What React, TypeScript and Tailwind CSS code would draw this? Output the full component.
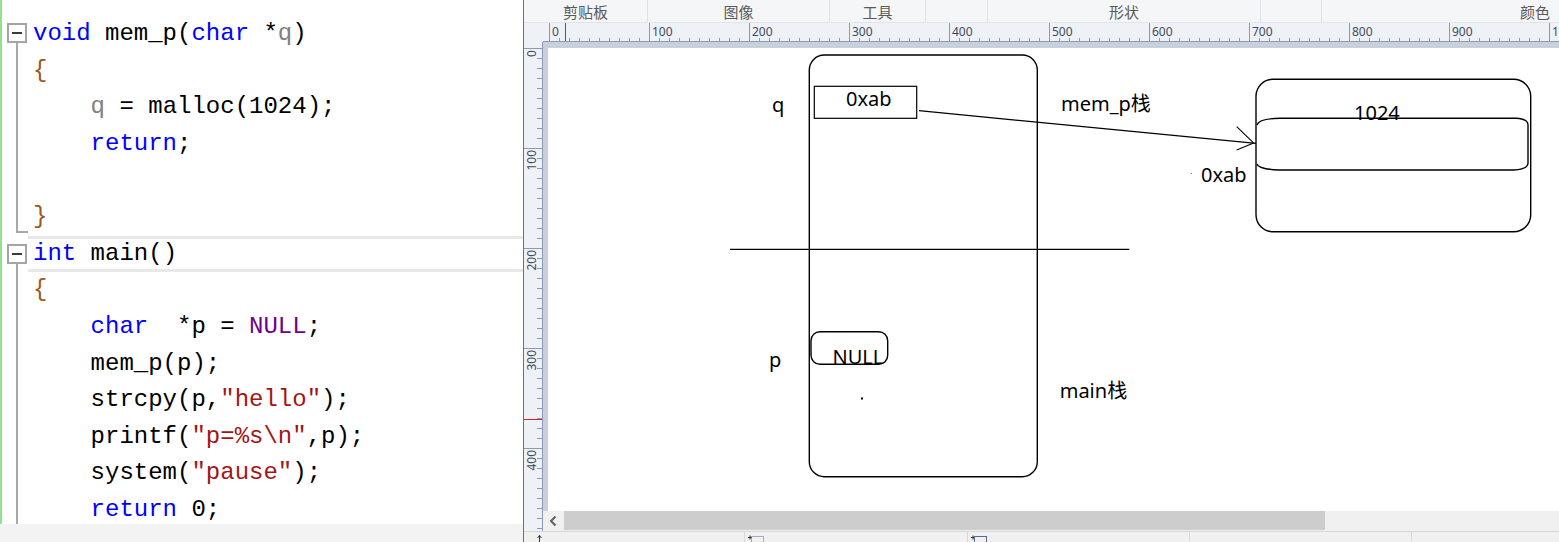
import React from "react";

const K = "text-[#0000ff]";
const P = "text-[#808080]";
const B = "text-[#9b5a1a]";
const S = "text-[#a31515]";
const N = "text-[#6f008a]";
const D = "text-black";

type Tok = [string, string];

const codeLines: Tok[][] = [
  [["void", K], [" mem_p(", D], ["char", K], [" *", D], ["q", P], [")", D]],
  [["{", B]],
  [["    ", D], ["q", P], [" = malloc(1024);", D]],
  [["    ", D], ["return", K], [";", D]],
  [],
  [["}", B]],
  [["int", K], [" main()", D]],
  [["{", B]],
  [["    ", D], ["char", K], ["  *p = ", D], ["NULL", N], [";", D]],
  [["    mem_p(p);", D]],
  [["    strcpy(p,", D], ['"hello"', S], [");", D]],
  [["    printf(", D], ['"p=%s\\n"', S], [",p);", D]],
  [["    system(", D], ['"pause"', S], [");", D]],
  [["    ", D], ["return", K], [" 0;", D]],
];

function Gutter() {
  return (
    <svg width={28} height={524} className="shrink-0 block">
      <rect x={0} y={0} width={2} height={524} fill="#8fe38f" />
      {/* fold box 1 */}
      <rect x={8} y={24} width={18} height={18} fill="#fff" stroke="#a5a5a5" strokeWidth={2} />
      <line x1={12} y1={33} x2={22} y2={33} stroke="#3a3a3a" strokeWidth={2} />
      <line x1={17} y1={43} x2={17} y2={233} stroke="#a8a8a8" strokeWidth={2} />
      <line x1={16} y1={232} x2={28} y2={232} stroke="#a8a8a8" strokeWidth={2} />
      {/* fold box 2 */}
      <rect x={8} y={245} width={18} height={18} fill="#fff" stroke="#a5a5a5" strokeWidth={2} />
      <line x1={12} y1={254} x2={22} y2={254} stroke="#3a3a3a" strokeWidth={2} />
      <line x1={17} y1={264} x2={17} y2={524} stroke="#a8a8a8" strokeWidth={2} />
    </svg>
  );
}

function CodePanel() {
  return (
    <div className="flex flex-col w-[523px] shrink-0">
      <div className="flex h-[524px] bg-white overflow-hidden">
        <Gutter />
        <div className="flex-1 flex flex-col pt-[16.3px] font-['Liberation_Mono',monospace] text-[24px] leading-[36.6px] whitespace-pre overflow-hidden">
          {codeLines.map((toks, i) => (
            <div
              key={i}
              className={
                i === 6
                  ? "h-[36.6px] shrink-0 pl-[5px] shadow-[inset_0_3px_0_#e8e8e8,inset_0_-3px_0_#e8e8e8]"
                  : "h-[36.6px] shrink-0 pl-[5px]"
              }
            >
              {toks.map(([t, c], j) => (
                <span key={j} className={c}>
                  {t}
                </span>
              ))}
            </div>
          ))}
        </div>
      </div>
      <div className="h-[18px] bg-[#f3f3f3]" />
    </div>
  );
}

function HRuler() {
  const w = 1035;
  const ticks: React.ReactNode[] = [];
  for (let x = 25; x < w; x += 10) {
    const major = (x - 25) % 100 === 0;
    ticks.push(
      <line
        key={x}
        x1={x + 0.5}
        x2={x + 0.5}
        y1={major ? 0 : 15}
        y2={19}
        stroke="#8a9ab6"
        strokeWidth={1}
      />
    );
    if (major) {
      ticks.push(
        <text key={"t" + x} x={x + 3} y={13} fontSize={12} fill="#3f4a5e" fontFamily="Noto Sans, sans-serif">
          {x - 25}
        </text>
      );
    }
  }
  return (
    <div className="h-[19px] bg-[#eef1f6] shrink-0">
      <svg width={w} height={19} className="block">
        {ticks}
        <line x1={41.5} x2={41.5} y1={0} y2={19} stroke="#e02020" strokeWidth={1} />
        <line x1={19} x2={w} y1={18.5} y2={18.5} stroke="#8a9ab6" strokeWidth={1} />
      </svg>
    </div>
  );
}

function VRuler() {
  const h = 489;
  const ticks: React.ReactNode[] = [];
  for (let y = 6; y < h; y += 10) {
    const major = (y - 6) % 100 === 0;
    ticks.push(
      <line
        key={y}
        y1={y + 0.5}
        y2={y + 0.5}
        x1={major ? 0 : 13}
        x2={19}
        stroke="#8a9ab6"
        strokeWidth={1}
      />
    );
    if (major) {
      ticks.push(
        <text
          key={"t" + y}
          transform={`translate(11.5, ${y + 2}) rotate(-90)`}
          textAnchor="end"
          fontSize={12}
          fill="#3f4a5e"
          fontFamily="Noto Sans, sans-serif"
        >
          {y - 6}
        </text>
      );
    }
  }
  return (
    <div className="w-[19px] bg-[#eef1f6] shrink-0">
      <svg width={19} height={h} className="block">
        {ticks}
        <line y1={377.5} y2={377.5} x1={0} x2={19} stroke="#e02020" strokeWidth={1} />
        <line x1={18.5} x2={18.5} y1={0} y2={h} stroke="#8a9ab6" strokeWidth={1} />
      </svg>
    </div>
  );
}

const txt = "absolute font-['Noto_Sans','Noto_Sans_CJK_SC',sans-serif] text-[20px] leading-[20px] text-black whitespace-nowrap";

function Canvas() {
  return (
    <div className="relative flex-1 bg-white overflow-hidden">
      <svg width={1011} height={463} className="absolute left-0 top-0" fill="none" stroke="#000" strokeWidth={1.4}>
        {/* main stack box */}
        <rect x={261.3} y={7} width={228} height={421.7} rx={15} />
        {/* 0xab box */}
        <rect x={266.3} y={38.3} width={102.4} height={32} strokeWidth={1.2} />
        {/* arrow */}
        <line x1={371} y1={62.7} x2={708} y2={95.3} strokeWidth={1.2} />
        <line x1={688.7} y1={78.7} x2={706} y2={95.3} strokeWidth={1.1} />
        <line x1={688.7} y1={102} x2={705} y2={95.3} strokeWidth={1.1} />
        {/* divider */}
        <line x1={182} y1={201.3} x2={581.3} y2={201.3} strokeWidth={1.2} />
        {/* heap box */}
        <rect x={708} y={31.3} width={274.7} height={152.4} rx={17} />
        <path d="M709,77 Q711,70.5 732,70.3 L968,70.3 Q980,71 980,77 L980,115 Q980,121 966,122 L730,122 Q710,121 709,116" />
        {/* NULL box */}
        <rect x={263} y={283.7} width={76.7} height={32.6} rx={9} />
        {/* dots */}
        <rect x={313} y={349.5} width={2} height={2} fill="#000" stroke="none" />
        <rect x={643} y={125} width={1} height={1} fill="#777" stroke="none" />
      </svg>
      <span className={txt + " left-[224px] top-[47.2px]"}>q</span>
      <span className={txt + " left-[298px] top-[41.2px]"}>0xab</span>
      <span className={txt + " left-[513px] top-[46px]"}>mem_p栈</span>
      <span className={txt + " left-[806px] top-[55px]"}>1024</span>
      <span className={txt + " left-[653px] top-[117px]"}>0xab</span>
      <span className={txt + " left-[284.5px] top-[299.2px]"}>NULL</span>
      <span className={txt + " left-[221px] top-[301.7px]"}>p</span>
      <span className={txt + " left-[511.7px] top-[333.2px]"}>main栈</span>
    </div>
  );
}

function Header() {
  const groups: [string, string][] = [
    ["剪贴板", "w-[124px]"],
    ["图像", "w-[182px]"],
    ["工具", "w-[96px]"],
    ["", "w-[62px]"],
    ["形状", "w-[273px]"],
    ["", "w-[61px]"],
    ["颜色", "w-[426px]"],
  ];
  return (
    <div className="h-[23px] shrink-0 bg-[#f5f6f7] border-b border-[#e1e3e6] flex overflow-hidden">
      {groups.map(([label, w], i) => (
        <div
          key={i}
          className={
            w +
            " shrink-0 h-full flex items-center justify-center text-[15px] leading-none text-[#5a5a5a] font-['Noto_Sans_CJK_SC',sans-serif] " +
            (i < groups.length - 1 ? "border-r border-[#e0e2e5]" : "")
          }
        >
          {label}
        </div>
      ))}
    </div>
  );
}

function Scrollbar() {
  return (
    <div className="h-[20px] shrink-0 flex bg-[#f0f0f0]">
      <div className="w-[21px] shrink-0 flex items-center justify-center">
        <svg width={21} height={20} className="block">
          <path d="M12.5 5.5 L8 10 L12.5 14.5" fill="none" stroke="#606060" strokeWidth={2} />
        </svg>
      </div>
      <div className="w-[761px] shrink-0 h-[19px] bg-[#cdcdcd]" />
      <div className="flex-1" />
    </div>
  );
}

function StatusBar() {
  const cells = ["w-[221px]", "w-[223px]", "w-[222px]", "w-[222px]", "flex-1"];
  return (
    <div className="h-[11px] shrink-0 bg-[#f0f0f0] border-t border-[#d7d7d7] flex overflow-hidden">
      {cells.map((w, i) => (
        <div key={i} className={w + " shrink-0 h-full pl-[8px] pt-[3px] " + (i < cells.length - 1 ? "border-r border-[#d9d9d9]" : "")}>
          {i === 0 && (
            <svg width={12} height={10} className="block ml-[3px]">
              <line x1={4.5} y1={0} x2={4.5} y2={10} stroke="#333" strokeWidth={1} />
              <path d="M2.5 3 L4.5 0.5 L6.5 3" fill="none" stroke="#333" strokeWidth={1} />
            </svg>
          )}
          {i === 1 && (
            <svg width={20} height={10} className="block -ml-[5px]">
              <line x1={0} y1={2.5} x2={4} y2={2.5} stroke="#333" />
              <line x1={2} y1={0.5} x2={2} y2={4.5} stroke="#333" />
              <rect x={3.5} y={1.5} width={12} height={10} fill="none" stroke="#5a6a8a" strokeDasharray="1 1" />
            </svg>
          )}
          {i === 2 && (
            <svg width={20} height={10} className="block -ml-[5px]">
              <line x1={0} y1={2.5} x2={4} y2={2.5} stroke="#333" />
              <line x1={2} y1={0.5} x2={2} y2={4.5} stroke="#333" />
              <rect x={3.5} y={1.5} width={12} height={10} fill="none" stroke="#5a6a8a" />
            </svg>
          )}
        </div>
      ))}
    </div>
  );
}

function PaintPanel() {
  return (
    <div className="flex-1 flex flex-col border-l border-[#2f7fd0] overflow-hidden">
      <Header />
      <HRuler />
      <div className="h-[489px] shrink-0 flex">
        <VRuler />
        <div className="flex-1 flex flex-col">
          <div className="h-[6px] shrink-0 bg-[#c8d0dd]" />
          <div className="h-[463px] shrink-0 flex">
            <div className="w-[5px] shrink-0 bg-[#c8d0dd]" />
            <Canvas />
          </div>
          <Scrollbar />
        </div>
      </div>
      <StatusBar />
    </div>
  );
}

export default function App() {
  return (
    <div className="w-[1559px] h-[542px] flex overflow-hidden bg-white">
      <CodePanel />
      <PaintPanel />
    </div>
  );
}
